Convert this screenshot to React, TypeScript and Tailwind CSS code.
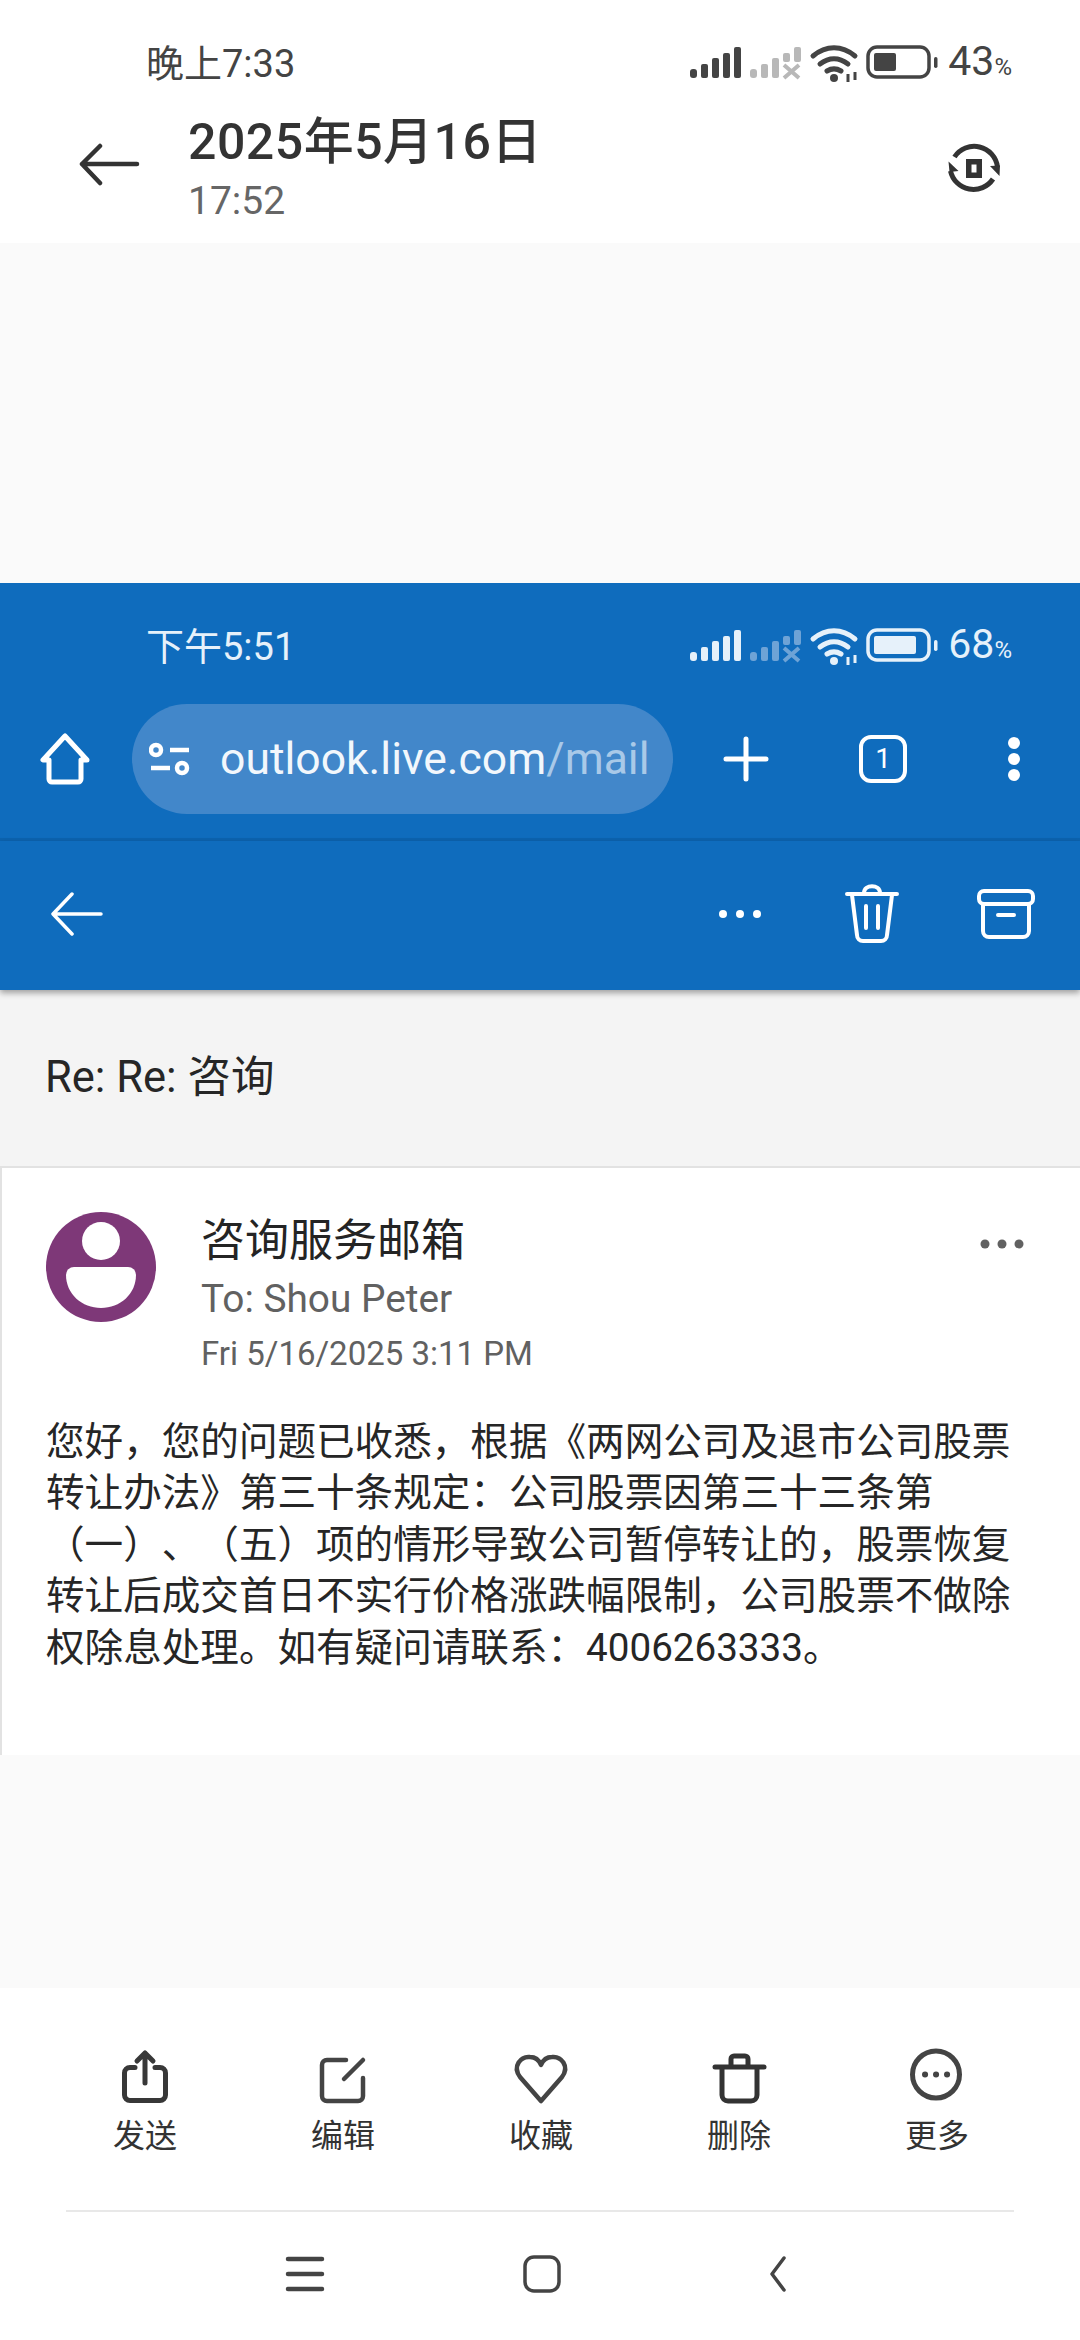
const FONT = 'font-["Roboto","Noto_Sans_CJK_SC",sans-serif]';

function StatusIcons({ main, dim, fill, level }: { main: string; dim: string; fill: string; level: number }) {
  return (
    <svg width="250" height="40" viewBox="0 0 250 40" className="shrink-0">
      <g fill={main}>
        <rect x="0" y="25" width="7" height="9" rx="3" />
        <rect x="11" y="20" width="7" height="14" rx="2" />
        <rect x="22" y="14" width="7" height="20" rx="2" />
        <rect x="33" y="9" width="7" height="25" rx="2" />
        <rect x="44" y="3" width="7" height="31" rx="2" />
      </g>
      <g fill={dim}>
        <rect x="60" y="25" width="7" height="9" rx="3" />
        <rect x="71" y="20" width="7" height="14" rx="2" />
        <rect x="82" y="14" width="7" height="20" rx="2" />
        <rect x="93" y="9" width="7" height="9" rx="2" />
        <rect x="104" y="3" width="7" height="15" rx="2" />
        <path d="M94 21l15 13M109 21l-15 13" stroke={dim} strokeWidth="4" fill="none" />
      </g>
      <g fill="none" stroke={main} strokeLinecap="round">
        <path d="M123 12c13-11 29-11 42 0" strokeWidth="5" />
        <path d="M130 20c9-7 19-7 28 0" strokeWidth="5" />
        <path d="M137 27c5-3 9-3 14 0" strokeWidth="5" />
      </g>
      <circle cx="144" cy="34" r="4" fill={main} />
      <path d="M158 30v8M165 28v8" stroke={main} strokeWidth="3" />
      <rect x="178" y="3" width="61" height="30" rx="9" fill="none" stroke={main} strokeWidth="3.5" />
      <rect x="184" y="9" width={level} height="18" rx="2" fill={fill} />
      <rect x="244" y="13" width="3.5" height="11" rx="1.7" fill={main} />
    </svg>
  );
}

function StatusBar({ time, pct, text, main, dim, fill, level }: { time: string; pct: string; text: string; main: string; dim: string; fill: string; level: number }) {
  return (
    <div className={`h-[44px] pl-[146px] pr-[68px] flex items-center justify-between ${text}`}>
      <span className="text-[38px] leading-[44px]">{time}</span>
      <div className="flex items-center">
        <StatusIcons main={main} dim={dim} fill={fill} level={level} />
        <span className="text-[41px] leading-[44px] ml-[8px]">{pct}<span className="text-[24px]">%</span></span>
      </div>
    </div>
  );
}

const ACTIONS = [
  {
    label: '发送',
    icon: (
      <g stroke="#383838" strokeWidth="5">
        <path d="M18 19.5h-5A5.5 5.5 0 0 0 7.5 25v22a5.5 5.5 0 0 0 5.5 5.5h30a5.5 5.5 0 0 0 5.5-5.5V25a5.5 5.5 0 0 0-5.5-5.5h-5" />
        <path d="M28 35V5M20 13l8-8 8 8" />
      </g>
    ),
  },
  {
    label: '编辑',
    icon: (
      <g stroke="#444444" strokeWidth="4.5">
        <path d="M31 12H12a5 5 0 0 0-5 5v31a5 5 0 0 0 5 5h31a5 5 0 0 0 5-5V30" />
        <path d="M29 31L48 12" />
      </g>
    ),
  },
  {
    label: '收藏',
    icon: <path d="M28 53L7 29C-1 18 8 8 17 9c5 0 9 3 11 8 2-5 6-8 11-8 9-1 18 9 10 20z" stroke="#444444" strokeWidth="4.5" />,
  },
  {
    label: '删除',
    icon: (
      <g stroke="#333333" strokeWidth="5">
        <path d="M4 19h49" />
        <path d="M11 20v27a6 6 0 0 0 6 6h23a6 6 0 0 0 6-6V20" />
        <path d="M20 17v-6a3 3 0 0 1 3-3h11a3 3 0 0 1 3 3v6" />
      </g>
    ),
  },
  {
    label: '更多',
    icon: (
      <g stroke="#444444" strokeWidth="5">
        <circle cx="27" cy="26.5" r="23.5" />
        <path d="M16 26.5h.1M27 26.5h.1M38 26.5h.1" strokeWidth="6" />
      </g>
    ),
  },
];

export default function App() {
  return (
    <div className={`w-[1080px] h-[2340px] flex flex-col overflow-hidden bg-[#fafafa] ${FONT}`}>
      {/* screenshot app header */}
      <div className="h-[243px] bg-white shrink-0 pt-[42px]">
        <StatusBar time="晚上7:33" pct="43" text="text-[#444444]" main="#444444" dim="#b8b8b8" fill="#444444" level={22} />
        <div className="flex items-start mt-[8px] pl-[78px] pr-[78px]">
          <svg width="64" height="44" viewBox="0 0 64 44" className="mt-[49px] shrink-0" fill="none" stroke="#333333" strokeWidth="4.5" strokeLinecap="round" strokeLinejoin="round">
            <path d="M22 3L4 21l18 19M4 21h55" />
          </svg>
          <div className="ml-[46px] flex-1 mt-[18px]">
            <div className="text-[50px] leading-[60px] font-medium text-[#333333] tracking-[0.5px]">2025年5月16日</div>
            <div className="text-[39px] leading-[46px] mt-[6px] text-[#666666]">17:52</div>
          </div>
          <svg width="56" height="56" viewBox="0 0 56 56" className="mt-[47px] shrink-0" fill="none" stroke="#333333" strokeWidth="5">
            <path d="M8.5 16A23.5 23.5 0 0 1 51.5 26" />
            <path d="M47 38A23.5 23.5 0 0 1 4.5 30" />
            <path d="M2.5 20.5L12.5 30L3.5 31zM44 25L54 24.5L53.5 35z" fill="#333333" stroke="none" />
            <rect x="22.75" y="20.75" width="10.5" height="13.5" strokeWidth="5.5" />
          </svg>
        </div>
      </div>

      <div className="h-[340px] shrink-0" />

      {/* phone screenshot: browser chrome */}
      <div className="h-[258px] shrink-0 bg-[#0f6cbd] pt-[42px] border-b-[3px] border-[#0c63af]">
        <StatusBar time="下午5:51" pct="68" text="text-[#e6f1fa]" main="#e6f1fa" dim="#6ea3d6" fill="#e6f1fa" level={42} />
        <div className="flex items-center mt-[35px] pl-[40px]">
          <svg width="50" height="52" viewBox="0 0 50 52" fill="none" stroke="#ffffff" strokeWidth="5" strokeLinejoin="round" className="shrink-0">
            <path d="M25 3L3 27h6v19a3 3 0 0 0 3 3h26a3 3 0 0 0 3-3V27h6z" />
          </svg>
          <div className="ml-[42px] w-[541px] h-[110px] rounded-[55px] bg-[#4287ca] flex items-center pl-[17px] shrink-0">
            <svg width="44" height="44" viewBox="0 0 44 44" fill="none" stroke="#ffffff" strokeWidth="4.5" className="shrink-0">
              <circle cx="7" cy="13" r="5" />
              <path d="M21 13h19M2 31h19" />
              <circle cx="33" cy="31" r="5" />
            </svg>
            <span className="ml-[27px] text-[44.5px] leading-[50px] text-[#f2f7fc] whitespace-nowrap">outlook.live.com<span className="text-[#a9c9e8]">/mail</span></span>
          </div>
          <svg width="46" height="46" viewBox="0 0 46 46" stroke="#ffffff" strokeWidth="5" strokeLinecap="round" className="ml-[50px] shrink-0">
            <path d="M23 3v40M3 23h40" />
          </svg>
          <div className="ml-[90px] w-[48px] h-[48px] rounded-[12px] border-[4px] border-white text-white text-[28px] leading-[40px] text-center shrink-0">1</div>
          <svg width="14" height="46" viewBox="0 0 14 46" fill="#ffffff" className="ml-[100px] shrink-0">
            <circle cx="7" cy="7" r="6" />
            <circle cx="7" cy="23" r="6" />
            <circle cx="7" cy="39" r="6" />
          </svg>
        </div>
      </div>

      {/* mail toolbar */}
      <div className="h-[149px] shrink-0 bg-[#0f6cbd] flex items-center pl-[50px] pb-[4px] shadow-[0_3px_6px_rgba(0,0,0,0.35)] relative">
        <svg width="54" height="44" viewBox="0 0 54 44" fill="none" stroke="#ffffff" strokeWidth="3.5" strokeLinecap="round" strokeLinejoin="round" className="shrink-0">
          <path d="M22 2L3 22l19 20M3 22h48" />
        </svg>
        <svg width="44" height="10" viewBox="0 0 44 10" fill="#ffffff" className="ml-[614px] shrink-0">
          <circle cx="5" cy="5" r="4" />
          <circle cx="22" cy="5" r="4" />
          <circle cx="39" cy="5" r="4" />
        </svg>
        <svg width="54" height="60" viewBox="0 0 54 60" fill="none" stroke="#ffffff" strokeWidth="4" strokeLinecap="round" strokeLinejoin="round" className="ml-[83px] shrink-0">
          <path d="M2 10h50M19 9c0-9 16-9 16 0M7 11l5 40a6 6 0 0 0 6 6h18a6 6 0 0 0 6-6l5-40M21 22v22M33 22v22" />
        </svg>
        <svg width="58" height="50" viewBox="0 0 58 50" fill="none" stroke="#ffffff" strokeWidth="4" strokeLinecap="round" strokeLinejoin="round" className="ml-[78px] shrink-0">
          <rect x="2" y="2" width="54" height="13" rx="5" />
          <path d="M6 15v27a6 6 0 0 0 6 6h34a6 6 0 0 0 6-6V15M21 26h16" />
        </svg>
      </div>

      {/* subject */}
      <div className="h-[176px] shrink-0 bg-[#f4f4f4] flex items-center pl-[45px]">
        <span className="text-[43.5px] leading-[50px] text-[#262626]">Re: Re: 咨询</span>
      </div>

      {/* message card */}
      <div className="h-[589px] shrink-0 bg-white border-t-2 border-l-2 border-[#e2e2e2] pl-[44px] pr-[50px] pt-[44px]">
        <div className="flex items-start">
          <svg width="112" height="112" viewBox="0 0 112 112" className="shrink-0">
            <circle cx="55" cy="55" r="55" fill="#7e3878" />
            <circle cx="55" cy="29" r="19" fill="#ffffff" />
            <path d="M20 63a8 8 0 0 1 8-8h54a8 8 0 0 1 8 8c0 19-16 33-35 33S20 82 20 63z" fill="#ffffff" />
          </svg>
          <div className="ml-[43px] flex-1">
            <div className="text-[44px] leading-[50px] text-[#242424] mt-[4px]">咨询服务邮箱</div>
            <div className="text-[38.8px] leading-[42px] text-[#616161] mt-[12px]">To: Shou Peter</div>
            <div className="text-[33px] leading-[38px] text-[#616161] mt-[15px]">Fri 5/16/2025 3:11 PM</div>
          </div>
          <svg width="44" height="10" viewBox="0 0 44 10" fill="#616161" className="mt-[27px] mr-[6px] shrink-0">
            <circle cx="5" cy="5" r="4.5" />
            <circle cx="22" cy="5" r="4.5" />
            <circle cx="39" cy="5" r="4.5" />
          </svg>
        </div>
        <p className="mt-[43px] w-[970px] text-[38.6px] leading-[51.4px] text-[#262626] [text-spacing-trim:space-all]">
          您好，您的问题已收悉，根据《两网公司及退市公司股票转让办法》第三十条规定：公司股票因第三十三条第（一）、（五）项的情形导致公司暂停转让的，股票恢复转让后成交首日不实行价格涨跌幅限制，公司股票不做除权除息处理。如有疑问请联系：4006263333。
        </p>
      </div>

      <div className="h-[233px] shrink-0" />

      {/* screenshot app bottom bar */}
      <div className="flex-1 bg-white flex flex-col">
        <div className="h-[222px] flex pl-[79px] pr-[77px] justify-between pt-[60px]">
          {ACTIONS.map(a => (
            <div key={a.label} className="w-[132px] flex flex-col items-center">
              <svg width="56" height="56" viewBox="0 0 56 56" fill="none" strokeLinecap="round" strokeLinejoin="round" className="overflow-visible">
                {a.icon}
              </svg>
              <span className="mt-[12px] text-[32px] leading-[40px] text-[#333333]">{a.label}</span>
            </div>
          ))}
        </div>
        <div className="mx-[66px] h-[2px] bg-[#e8e8e8]" />
        <div className="flex-1 flex items-center justify-center pb-[4px] pr-[6px]">
          <svg width="40" height="38" viewBox="0 0 40 38" stroke="#444444" strokeWidth="4.5" strokeLinecap="round">
            <path d="M3 4h34M3 19h34M3 34h34" />
          </svg>
          <svg width="38" height="38" viewBox="0 0 38 38" fill="none" stroke="#444444" strokeWidth="3.5" className="ml-[198px]">
            <rect x="2" y="2" width="34" height="34" rx="9" />
          </svg>
          <svg width="24" height="38" viewBox="0 0 24 38" fill="none" stroke="#444444" strokeWidth="3.5" strokeLinecap="round" strokeLinejoin="round" className="ml-[205px]">
            <path d="M18 3L6 19l12 16" />
          </svg>
        </div>
      </div>
    </div>
  );
}
